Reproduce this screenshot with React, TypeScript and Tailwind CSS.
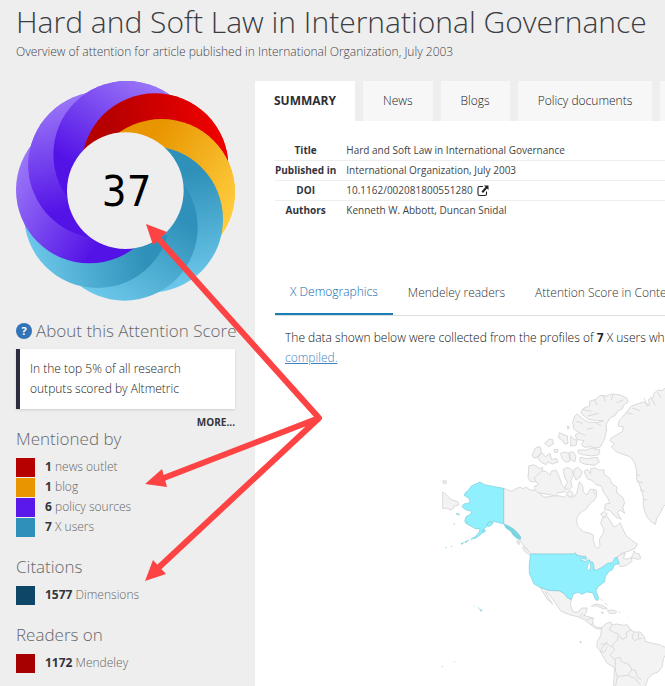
import type { ReactNode } from 'react'

const tabs = ['News', 'Blogs', 'Policy documents']
const subTabs = ['Mendeley readers', 'Attention Score in Context']

const mentions = [
  { count: 1, label: 'news outlet', color: 'bg-[#b60000]' },
  { count: 1, label: 'blog', color: 'bg-[#e89500]' },
  { count: 6, label: 'policy sources', color: 'bg-[#5a19ea]' },
  { count: 7, label: 'X users', color: 'bg-[#2f90b9]' },
]
const citations = [{ count: 1577, label: 'Dimensions', color: 'bg-[#0e4667]' }]
const readers = [{ count: 1172, label: 'Mendeley', color: 'bg-[#a60000]' }]

export default function App() {
  return (
    <div className="relative min-h-screen overflow-hidden bg-[#eeeeee] font-['Open_Sans',sans-serif] text-[#444]">
      <header className="h-[81px] px-4 pt-1 whitespace-nowrap">
        <h1 className="text-[30px] leading-9 font-light text-[#3c3d42]">
          Hard and Soft Law in International Governance
        </h1>
        <p className="mt-0.5 text-[12px] leading-5 font-[350] text-[#444448]">
          Overview of attention for article published in International Organization, July 2003
        </p>
      </header>

      <div className="flex">
        <aside className="w-[255px] shrink-0 pr-5 pl-4">
          <Donut score={37} />

          <h2 className="mt-5 flex items-center gap-1 text-[17px] leading-5 font-light whitespace-nowrap text-[#66676c]">
            <a
              href="#about"
              aria-label="About the score"
              className="flex h-4 w-4 shrink-0 items-center justify-center rounded-full bg-[#3373b7] text-[11px] leading-4 font-bold text-white"
            >
              ?
            </a>
            About this Attention Score
          </h2>
          <div className="mt-2 border-l-4 border-[#2c2d3f] bg-white py-2.5 pr-5 pl-2.5 text-[12px] leading-5 font-[350] text-[#222] shadow-sm">
            In the top 5% of all research outputs scored by Altmetric
          </div>
          <a href="#more" className="mt-1.5 block text-right text-[10px] leading-[14px] font-bold text-[#33343c]">
            MORE...
          </a>

          <CountList title="Mentioned by" items={mentions} />
          <CountList title="Citations" items={citations} />
          <CountList title="Readers on" items={readers} />
        </aside>

        <main className="min-w-0 flex-1">
          <nav className="flex gap-2 overflow-hidden text-[12px] whitespace-nowrap text-[#222]">
            <button type="button" className="h-10 shrink-0 bg-white px-[19px] font-bold text-[#2c2d33]">
              SUMMARY
            </button>
            {tabs.map((tab) => (
              <button key={tab} type="button" className="h-10 shrink-0 bg-[#f7f7f7] px-5 font-[350]">
                {tab}
              </button>
            ))}
            <span className="h-10 flex-1 bg-[#f7f7f7]" />
          </nav>

          <div className="min-h-[565px] overflow-hidden bg-white pt-5 pl-5">
            <table className="w-full text-[10px] leading-[19px]">
              <tbody>
                <DetailRow label="Title">Hard and Soft Law in International Governance</DetailRow>
                <DetailRow label="Published in">International Organization, July 2003</DetailRow>
                <DetailRow label="DOI">
                  <a href="#doi" className="inline-flex items-center gap-1">
                    10.1162/002081800551280
                    <ExternalIcon />
                  </a>
                </DetailRow>
                <DetailRow label="Authors">Kenneth W. Abbott, Duncan Snidal</DetailRow>
              </tbody>
            </table>

            <nav className="mt-[51px] flex overflow-hidden border-b border-[#dcdfe2] text-[12px] font-[350] whitespace-nowrap text-[#333]">
              <button type="button" className="h-11 shrink-0 border-b-2 border-[#1a7db6] px-[15px] text-[#0f69ad]">
                X Demographics
              </button>
              {subTabs.map((tab) => (
                <button key={tab} type="button" className="h-11 shrink-0 px-[15px]">
                  {tab}
                </button>
              ))}
            </nav>

            <p className="mt-3 ml-2.5 text-[12px] leading-5 font-[350] whitespace-nowrap text-[#111]">
              The data shown below were collected from the profiles of <b className="text-[#222]">7</b> X users who shared
              <br />
              <a href="#compiled" className="text-[#3f7fc2] underline">
                compiled.
              </a>
            </p>

            <WorldMap />
          </div>
        </main>
      </div>

      <Arrows />
    </div>
  )
}

interface CountListProps {
  title: string
  items: { count: number; label: string; color: string }[]
}

function CountList({ title, items }: CountListProps) {
  return (
    <section className="mb-5">
      <h2 className="mb-2 text-[17px] leading-5 font-light text-[#66676c]">{title}</h2>
      <ul>
        {items.map((item) => (
          <li key={item.label} className="flex h-5 items-center gap-2.5 text-[12px] font-light text-[#666]">
            <span className={`h-[19px] w-[19px] ${item.color}`} />
            <span>
              <b className="font-bold text-[#33343c]">{item.count}</b> {item.label}
            </span>
          </li>
        ))}
      </ul>
    </section>
  )
}

function DetailRow({ label, children }: { label: string; children: ReactNode }) {
  return (
    <tr className="border-b border-[#eeeeee] last:border-0">
      <th scope="row" className="w-[61px] text-center font-bold whitespace-nowrap text-[#33343c]">
        {label}
      </th>
      <td className="pl-2.5 whitespace-nowrap">{children}</td>
    </tr>
  )
}

function ExternalIcon() {
  return (
    <svg viewBox="0 0 24 24" className="h-3 w-3" aria-hidden="true">
      <path d="M12 3H5Q2 3 2 6v12q0 3 3 3h11q3 0 3-3v-5" fill="none" stroke="#222" strokeWidth="2.2" />
      <path d="M14 1h9v9l-3-3-8 9-3-3 8-9z" fill="#222" />
    </svg>
  )
}

const R = 220
const reds = ['#b60000', '#f00000']
const yellows = ['#e89500', '#ffcd3e']
const blues = ['#2f90b9', '#6cc8ea']
const purples = ['#5312e6', '#9a76f8']

// clockwise, starting at the upper right
const petals = [
  { cx: 435, cy: 275, angle: -40, colors: reds },
  { cx: 455, cy: 352, angle: 2, colors: yellows },
  { cx: 419, cy: 433, angle: 47, colors: blues },
  { cx: 343, cy: 457, angle: 92, colors: blues },
  { cx: 262, cy: 419, angle: 137, colors: blues },
  { cx: 238, cy: 345, angle: 182, colors: purples },
  { cx: 275, cy: 270, angle: 227, colors: purples },
  { cx: 350, cy: 238, angle: 272, colors: purples },
]

function Petal({ index }: { index: number }) {
  return <circle cx={petals[index].cx} cy={petals[index].cy} r={R} fill={`url(#petal-${index})`} />
}

function Donut({ score }: { score: number }) {
  return (
    <svg viewBox="18 18 657 660" className="block w-full" role="img" aria-label={`Attention score ${score}`}>
      <defs>
        {petals.map((p, i) => {
          const a = ((p.angle + 30) * Math.PI) / 180
          const dx = Math.cos(a) * R
          const dy = Math.sin(a) * R
          return (
            <linearGradient
              key={i}
              id={`petal-${i}`}
              gradientUnits="userSpaceOnUse"
              x1={p.cx - dx * 0.5}
              y1={p.cy - dy * 0.5}
              x2={p.cx + dx}
              y2={p.cy + dy}
            >
              <stop offset="0" stopColor={p.colors[0]} />
              <stop offset="1" stopColor={p.colors[1]} />
            </linearGradient>
          )
        })}
        <clipPath id="overlap">
          <path d="M0 0H720V480H347V347H0Z" />
        </clipPath>
        <clipPath id="overlap-right">
          <path d="M347 0H720V480H347Z" />
        </clipPath>
      </defs>
      {petals.map((_, i) => (
        <Petal key={i} index={i} />
      ))}
      {/* the ring overlaps itself, so the first petals go over the last ones again */}
      <g clipPath="url(#overlap)">
        {[6, 7, 0, 1].map((i) => (
          <Petal key={i} index={i} />
        ))}
      </g>
      <g clipPath="url(#overlap-right)">
        <Petal index={2} />
        <Petal index={3} />
      </g>
      <circle cx="346" cy="347" r="175" fill="#eeeeee" />
      <text
        x="350"
        y="394"
        textAnchor="middle"
        fontSize="130"
        className="fill-black font-['DejaVu_Sans_Condensed','Open_Sans',sans-serif]"
      >
        {score}
      </text>
    </svg>
  )
}

function WorldMap() {
  return (
    <svg
      viewBox="0 0 705 918"
      className="mt-3 ml-[155px] block h-[306px] w-[235px]"
      strokeLinejoin="round"
      role="img"
      aria-label="Map of X users by country"
    >
      <g fill="#f3f3f3" stroke="#dadada" strokeWidth="3">
        {/* Russia, eastern tip */}
        <path d="M38 336l12 9 12 13 22 8 2 9-14 3-2 8-10 4-12-6-10 2z" />
        <path d="M38 303l10-1 2 7-8 3z" />
        {/* Canada, mainland */}
        <path d="M221 325L245 334 258 326 270 322 280 326 288 321 300 330 322 332 330 342 345 352 375 347 390 348 404 352 415 340 424 350 432 352 440 340 445 320 448 305 458 318 460 335 470 345 480 328 492 328 500 345 494 360 480 370 470 386 455 395 442 410 440 424 444 440 460 455 480 460 490 465 490 482 496 500 504 506 510 496 508 478 520 460 522 448 512 430 518 412 530 408 542 424 550 440 560 438 570 428 578 446 588 466 604 480 622 492 616 504 600 512 575 520 560 532 572 524 586 520 580 534 592 538 604 532 606 544 590 556 570 560 564 548 548 552 530 554 515 566 495 574 488 550 470 532 434 522 302 522 292 508 275 490 262 468 245 448 221 432Z" />
        <path d="M612 512L618 520 628 522 632 536 620 538 604 532 610 522Z" />
        <path d="M262 480l6 4 0 10-8-6zM278 500l14 10 14 14-6 2-18-14z" />
        {/* Baffin */}
        <path d="M462 274l10-6 10 14 0-16 14-2 10 6 16 0 0 12 18 14 6 16 14 8 0 18 18 14 6 16-6 14 6 18-14-10-8 8 12 20-18-8-16-18-16-4 2-16 14-2-8-18-12-16-6-18-16-4-10-12-16-6-6-12z" />
        <path d="M512 402l12-8 8 8-10 12zM489 334l8-6 4 8-6 6z" />
        {/* Victoria and Banks */}
        <path d="M296 258l16-4 18 12 8-4 0 12-12 14-10 18-16-2-6-12 2-18z" />
        <path d="M334 274l14 0 12 12 4-12 14-4 8 16 10 28 12 14-6 8-18 2-6 10-30-6-24-4-10-10 0-10 12-4-8-8-6-12 8-6z" />
        <path d="M400 268l14-6 12 8 4 16-8 16 4 18-10 10-12-6 8-18-8-14zM432 268l12-6 12 12-4 16-14 10-6-14zM408 338l14-6 10 12-14 8z" />
        {/* Parry islands */}
        <path d="M306 226l10-22 14-4 4 14-8 16-14 4zM322 232l14-14 10 12 14-10 4 18 16-2 4 10-16 6-14-6-6 8-16-8zM344 190l12-12 12 0 2 14-14 8z" />
        <path d="M388 158l14 6 10 4 2 22-10 2-8-12-10-6zM422 168l10 10 10 4-4 14-16 2zM392 220l12-4 12 4 4 24-14 2-10-10zM418 216l12 0 8 12-4 18-12-8zM444 210l24 0 18-6 24 6-4 14-22 4-26-4-14-6z" />
        <path d="M450 232l22 4 30-4 6 14-14 10-30-4-14-6zM412 138l6 2-4 8zM374 208l10 0-2 10-10-2z" />
        {/* Ellesmere */}
        <path d="M452 98L462 84 480 78 478 64 498 58 510 46 530 48 545 42 568 44 590 54 594 66 580 76 578 86 562 94 556 106 540 114 528 134 530 150 524 176 512 200 498 204 480 200 464 202 454 194 462 182 440 178 436 164 448 158 432 148 428 128 434 108 442 102 458 116 472 126 500 128 522 122 500 122 474 118Z" />
        <path d="M456 88l28 6M474 108l32-8M492 58l10 18M520 48l6 16M548 44l-4 16M580 60l-20 8M440 124l18 6M470 148l20-4M450 160l16 6M500 130l14 8" fill="none" />
        {/* Greenland */}
        <path d="M710 22L694 32 684 30 672 40 668 54 656 58 658 76 640 66 622 72 604 78 590 96 580 108 568 122 564 138 580 140 578 154 562 164 544 174 540 182 554 192 544 200 560 216 582 224 600 230 614 248 620 270 620 300 628 312 634 330 640 352 640 376 644 394 652 412 664 426 676 433 680 416 690 400 700 380 710 370Z" />
        <path d="M642 54l10 26M662 50l14 26M682 36l12 18M606 84l24 8M590 98l18 4M618 282l12 6M622 304l16 4M630 330l14 4M638 358l14 2" fill="none" />
        {/* Mexico and Central America */}
        <path d="M330 622L352 630 386 632 402 640 412 653 424 659 421 676 430 696 445 696 455 684 472 684 468 698 462 706 474 710 490 714 488 732 500 742 516 742 512 748 496 745 480 732 464 720 446 711 415 703 392 693 384 680 370 660 358 644 350 636 346 636 356 654 368 672 352 658 342 642Z" />
        <path d="M448 710l10-10M456 712l8-8M468 720l20-6M482 734l8-4" fill="none" />
        {/* Caribbean */}
        <path d="M484 678l14-6 18 4 16 10-14 0-16-8zM532 692l14-2 14 4-4 6-18 0zM514 696l8 2-6 2zM566 697l5 0M512 656l6 6M524 668l8 8M592 714l2 2" />
        {/* South America */}
        <path d="M516 742L526 732 542 726 546 734 560 732 580 736 592 734 600 748 614 756 632 756 642 770 646 784 668 790 688 794 710 804 710 820 700 836 696 862 684 876 668 882 654 896 644 925 550 925 554 864 530 848 510 812 500 800 502 786 512 766 514 752Z" />
        <path d="M546 734l-8 16 16 8 12 4-4 18-10 10-6 10-16-8-18 0M566 764l10 14 14-6-2-14 10-6 8-2M612 756l-6 18 8 8 8-4 14-4M626 758l-2 18M546 798l8 12-14 14 10 12 8 2M532 784l-12 14-10 18 14 0 8-16" fill="none" />
        <path d="M556 836l14-4 4 12 24 10 8 16-10 10 4 10 14 4 18 22M606 870l10 0 6 20 12 10M562 890l26-4 8 2M556 836l0 34 6 20-6 30" fill="none" />
        <path d="M450 784l4 1-1 4-3-1zM34 860l6 0M72 845l3 0" />
      </g>

      {/* United States */}
      <g fill="#90f0fe" stroke="#7cccd8" strokeWidth="2">
        <path d="M221 325L221 432 206 428 190 424 176 426 170 440 164 444 154 462 138 474 122 478 138 468 148 456 150 446 136 446 126 440 110 432 104 424 108 410 122 402 126 394 108 390 96 380 102 372 120 368 118 356 102 346 108 336 116 330 124 318 138 312 150 306 164 314 184 318 204 322Z" />
        <path d="M302 522L432 522 436 518 440 526 458 530 466 528 470 538 456 536 450 540 466 544 476 540 482 544 474 552 471 566 476 572 482 564 481 548 488 546 492 560 490 568 500 570 516 562 532 550 548 548 554 534 561 532 568 550 552 556 548 568 535 576 526 590 524 605 504 620 498 632 506 656 502 662 496 658 488 638 470 636 456 643 445 637 430 642 424 659 412 653 402 640 388 632 360 632 330 622 312 612 298 580 298 550Z" />
        <path d="M170 432l10-6 10 2-6 8-10 4zM158 450l8 0-2 6-8 2zM104 486l12-5-10 7zM93 491l8-3-6 5zM78 400l11 3-6 2zM70 431l6 1M62 500l5-1M47 503l4 0M108 428l6-3" />
        <path d="M222 432l14 6 14 8 12 12 10 12 0 8-10-2-12-10-8-12-14-10z" fill="#76d5e0" />
        <path d="M133 678l2 1M144 683l4 2M149 688l7 3-2 3z" />
      </g>
    </svg>
  )
}

function Arrows() {
  return (
    <svg
      viewBox="0 0 665 686"
      className="pointer-events-none absolute top-0 left-0 h-[686px] w-[665px]"
      fill="#fd4343"
      aria-hidden="true"
    >
      <path d="M156 236L319 418L156 481M156 570L319 418" fill="none" stroke="#fd4343" strokeWidth="6" strokeLinejoin="round" />
      <path d="M146 224l21 8-14 13zM145 484l17-15 5 18zM145 581l8-21 13 14z" />
    </svg>
  )
}
